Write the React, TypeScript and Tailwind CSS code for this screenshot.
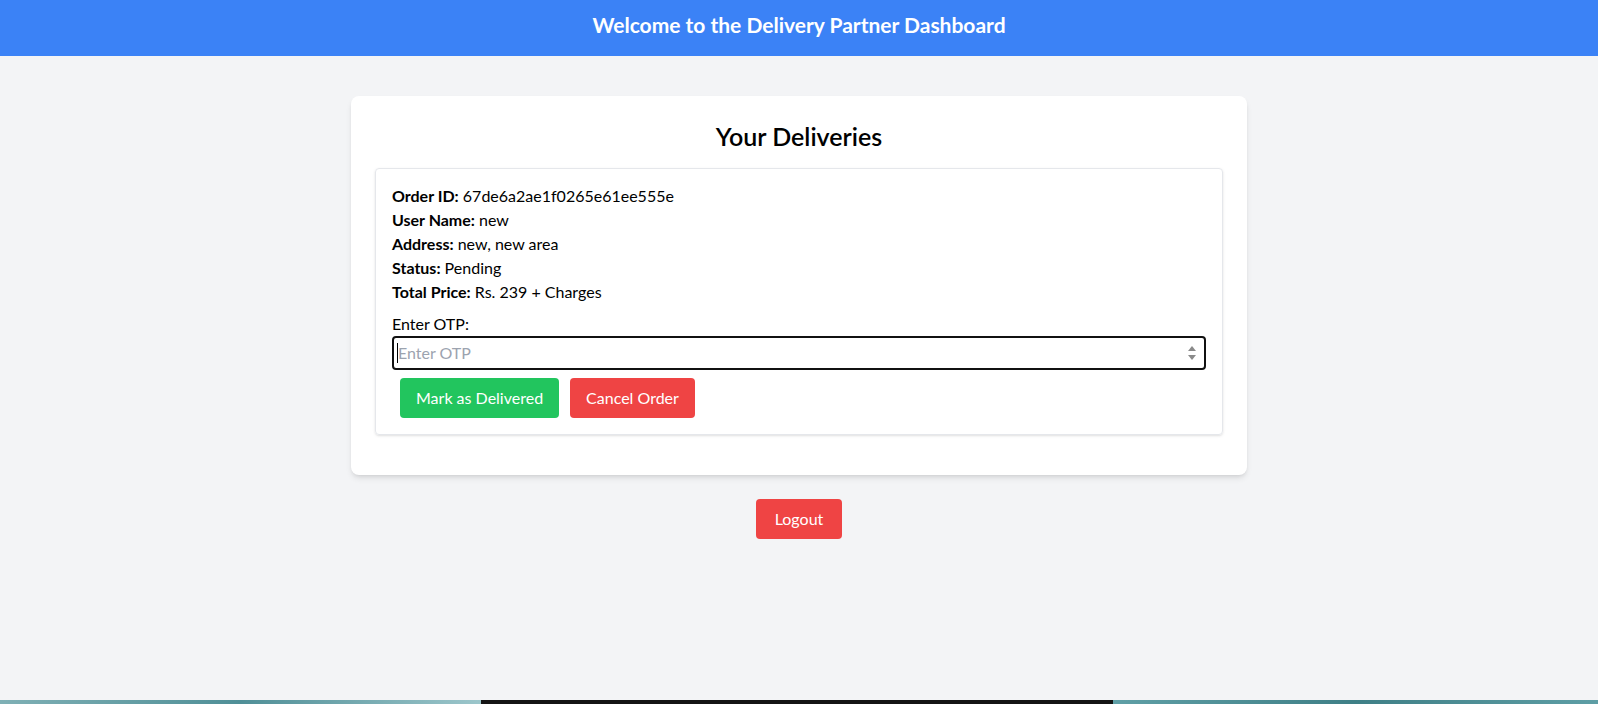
import React from "react";

export default function App() {
  const font = { fontFamily: '"Lato", "Noto Sans", sans-serif' };
  return (
    <div className="h-[704px] flex flex-col bg-[#f3f4f6] text-black" style={font}>
      <div className="flex-1 flex flex-col">
        <header className="h-14 bg-[#3b82f6] flex items-center justify-center pb-[6px]">
          <h1 className="text-white text-[21px] font-bold">Welcome to the Delivery Partner Dashboard</h1>
        </header>
        <main className="flex flex-col items-center">
          <div className="mt-10 w-[896px] bg-white rounded-lg shadow-md p-6">
            <h2 className="text-[25px] leading-8 font-semibold text-center mb-4">Your Deliveries</h2>
            <div className="border border-[#e5e7eb] rounded shadow-sm px-4 pt-[15px] pb-4 mb-4">
              <p><span className="font-bold">Order ID:</span> 67de6a2ae1f0265e61ee555e</p>
              <p><span className="font-bold">User Name:</span> new</p>
              <p><span className="font-bold">Address:</span> new, new area</p>
              <p><span className="font-bold">Status:</span> Pending</p>
              <p><span className="font-bold">Total Price:</span> Rs. 239 + Charges</p>
              <label className="block mt-2">Enter OTP:</label>
              <div className="h-[34px] border-2 border-[#111] rounded flex items-center pl-[3px] pr-[7px]">
                <div className="w-px h-[20px] bg-black" />
                <span className="flex-1 text-[#9ca3af]">Enter OTP</span>
                <svg width="10" height="20" viewBox="0 0 10 20">
                  <path d="M1 8 L5 3 L9 8 Z" fill="#8a8a8a" />
                  <path d="M1 12 L5 17 L9 12 Z" fill="#8a8a8a" />
                </svg>
              </div>
              <div className="flex mt-2 ml-2 gap-[11px]">
                <button className="h-10 px-4 bg-[#22c55e] text-white rounded">Mark as Delivered</button>
                <button className="h-10 px-4 bg-[#ef4444] text-white rounded">Cancel Order</button>
              </div>
            </div>
          </div>
          <button className="mt-6 h-10 px-[19px] bg-[#ef4444] text-white rounded">Logout</button>
        </main>
      </div>
      <div className="h-1 flex">
        <div className="w-[481px] bg-gradient-to-r from-[#7fb0b5] via-[#4f8f97] to-[#9cc6cb]" />
        <div className="w-[632px] bg-[#141414]" />
        <div className="flex-1 bg-gradient-to-r from-[#5f9fa6] via-[#3e7f86] to-[#5e9ea5]" />
      </div>
    </div>
  );
}
